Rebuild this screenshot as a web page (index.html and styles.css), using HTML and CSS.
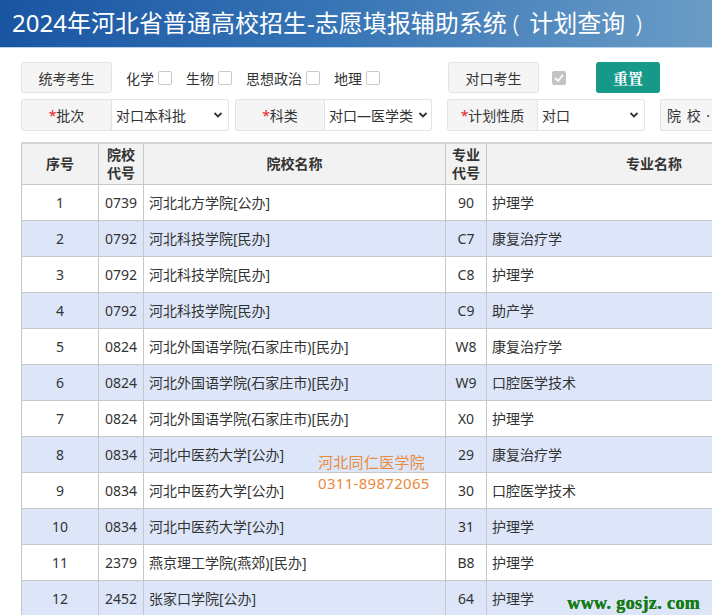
FILE: index.html
```html
<!DOCTYPE html>
<html lang="zh">
<head>
<meta charset="utf-8">
<title>计划查询</title>
<link rel="stylesheet" href="styles.css">
</head>
<body>
<header class="topbar">2024年河北省普通高校招生-志愿填报辅助系统<span class="paren">(</span>计划查询<span class="paren">)</span></header>

<div class="toolbar">
  <div class="row row-one">
    <span class="tag tag-wide">统考考生</span>
    <label class="chk">化学<span class="box"></span></label>
    <label class="chk">生物<span class="box"></span></label>
    <label class="chk">思想政治<span class="box"></span></label>
    <label class="chk">地理<span class="box"></span></label>
    <span class="tag tag-wide tag-dk">对口考生</span>
    <span class="box box-checked"><svg viewBox="0 0 14 14" width="14" height="14"><path d="M3 7.2 L6 10 L11 3.8" fill="none" stroke="#fff" stroke-width="1.8"/></svg></span>
    <button class="reset">重置</button>
  </div>
  <div class="row row-two">
    <div class="group g1"><span class="tag"><i>*</i>批次</span><span class="sel s1">对口本科批<svg class="chev" viewBox="0 0 10 8" width="10" height="8"><path d="M1.5 2 L5 5.5 L8.5 2" fill="none" stroke="#333" stroke-width="1.8"/></svg></span></div>
    <div class="group g2"><span class="tag"><i>*</i>科类</span><span class="sel s2">对口—医学类<svg class="chev" viewBox="0 0 10 8" width="10" height="8"><path d="M1.5 2 L5 5.5 L8.5 2" fill="none" stroke="#333" stroke-width="1.8"/></svg></span></div>
    <div class="group g3"><span class="tag"><i>*</i>计划性质</span><span class="sel s3">对口<svg class="chev" viewBox="0 0 10 8" width="10" height="8"><path d="M1.5 2 L5 5.5 L8.5 2" fill="none" stroke="#333" stroke-width="1.8"/></svg></span></div>
    <div class="group g4"><span class="tag tag-school">院 校 ·</span></div>
  </div>
</div>

<div class="tablewrap">
<table class="plan">
  <colgroup>
    <col class="c1"><col class="c2"><col class="c3"><col class="c4"><col class="c5">
  </colgroup>
  <thead>
    <tr><th>序号</th><th>院校<br>代号</th><th>院校名称</th><th>专业<br>代号</th><th>专业名称</th></tr>
  </thead>
  <tbody>
    <tr><td>1</td><td>0739</td><td class="l">河北北方学院[公办]</td><td>90</td><td class="l">护理学</td></tr>
    <tr class="alt"><td>2</td><td>0792</td><td class="l">河北科技学院[民办]</td><td>C7</td><td class="l">康复治疗学</td></tr>
    <tr><td>3</td><td>0792</td><td class="l">河北科技学院[民办]</td><td>C8</td><td class="l">护理学</td></tr>
    <tr class="alt"><td>4</td><td>0792</td><td class="l">河北科技学院[民办]</td><td>C9</td><td class="l">助产学</td></tr>
    <tr><td>5</td><td>0824</td><td class="l">河北外国语学院(石家庄市)[民办]</td><td>W8</td><td class="l">康复治疗学</td></tr>
    <tr class="alt"><td>6</td><td>0824</td><td class="l">河北外国语学院(石家庄市)[民办]</td><td>W9</td><td class="l">口腔医学技术</td></tr>
    <tr><td>7</td><td>0824</td><td class="l">河北外国语学院(石家庄市)[民办]</td><td>X0</td><td class="l">护理学</td></tr>
    <tr class="alt"><td>8</td><td>0834</td><td class="l">河北中医药大学[公办]</td><td>29</td><td class="l">康复治疗学</td></tr>
    <tr><td>9</td><td>0834</td><td class="l">河北中医药大学[公办]</td><td>30</td><td class="l">口腔医学技术</td></tr>
    <tr class="alt"><td>10</td><td>0834</td><td class="l">河北中医药大学[公办]</td><td>31</td><td class="l">护理学</td></tr>
    <tr><td>11</td><td>2379</td><td class="l">燕京理工学院(燕郊)[民办]</td><td>B8</td><td class="l">护理学</td></tr>
    <tr class="alt"><td>12</td><td>2452</td><td class="l">张家口学院[公办]</td><td>64</td><td class="l">护理学</td></tr>
  </tbody>
</table>
</div>

<div class="stamp">河北同仁医学院<br>0311-89872065</div>
<div class="site">www. gosjz. com</div>
</body>
</html>
```

FILE: styles.css
```css
* { box-sizing: border-box; }
html, body { margin: 0; padding: 0; }
body {
  width: 712px;
  height: 615px;
  overflow: hidden;
  position: relative;
  background: #fff;
  color: #333;
  font-family: "Noto Sans", "Noto Sans CJK SC", sans-serif;
  font-size: 14px;
}
.topbar {
  height: 48px;
  padding: 4px 0 0 12px;
  color: #fff;
  font-size: 24px;
  line-height: 38px;
  letter-spacing: 0;
  white-space: nowrap;
  background: linear-gradient(90deg, #1a55a2 0%, #3573b5 45%, #6a9cc6 100%);
  border-bottom: 1px solid #b9d3ea;
}
.paren {
  font-weight: 300;
  margin: 0 10px 0 6px;
}
.paren + .paren { margin: 0 0 0 10px; }
.toolbar {
  padding: 14px 0 0 21px;
}
.row {
  display: flex;
  align-items: center;
  white-space: nowrap;
}
.row-one { height: 31px; }
.row-two { height: 32px; margin-top: 6px; }
.tag {
  display: inline-flex;
  align-items: center;
  justify-content: center;
  height: 31px;
  background: #f5f5f5;
  border: 1px solid #e3e3e3;
  border-radius: 3px;
  color: #333;
}
.tag-wide { width: 91px; }
.tag-dk { margin-left: 68px; }
.chk {
  display: inline-flex;
  align-items: center;
  margin-left: 14px;
  color: #333;
}
.box {
  display: inline-block;
  width: 14px;
  height: 14px;
  margin-left: 4px;
  border: 1px solid #c9c9c9;
  border-radius: 2px;
  background: #fff;
}
.box-checked {
  margin-left: 13px;
  background: #c4c4c4;
  border-color: #c4c4c4;
  display: inline-flex;
}
.box-checked svg { display: block; margin: -1px; }
.reset {
  margin-left: 30px;
  width: 64px;
  height: 31px;
  border: 0;
  border-radius: 3px;
  background: #17998a;
  color: #fff;
  font-family: "Liberation Serif", "Noto Serif CJK SC", "Noto Sans CJK SC", serif;
  font-weight: bold;
  font-size: 15px;
  padding: 0;
}
.group {
  display: flex;
  height: 32px;
}
.group .tag {
  height: 32px;
  width: 91px;
  border-radius: 3px 0 0 3px;
}
.group i { font-style: normal; color: #e0262b; }
.sel {
  display: flex;
  align-items: center;
  justify-content: space-between;
  height: 32px;
  padding: 0 5px 0 4px;
  border: 1px solid #e3e3e3;
  border-left: 0;
  border-radius: 0 3px 3px 0;
  background: #fff;
  color: #333;
}
.chev { flex: none; }
.s1 { width: 117px; }
.g2 { margin-left: 6px; }
.g2 .tag { width: 90px; }
.s2 { width: 107px; padding-right: 3px; }
.g3 { margin-left: 15px; }
.s3 { width: 107px; }
.g4 { margin-left: 15px; }
.tag-school {
  width: 70px !important;
  justify-content: flex-start !important;
  padding-left: 6px;
  border-right: 0;
  border-radius: 3px 0 0 3px;
  letter-spacing: 1px;
}
.tablewrap {
  margin: 11px 0 0 21px;
  width: 800px;
}
.plan {
  border-collapse: collapse;
  table-layout: fixed;
  width: 800px;
  border-top: 2px solid #d5d5d5;
}
.c1 { width: 77px; }
.c2 { width: 45px; }
.c3 { width: 302px; }
.c4 { width: 41px; }
.c5 { width: 335px; }
.plan th, .plan td {
  border: 1px solid #c8c8c8;
  text-align: center;
  padding: 0;
}
.plan th {
  height: 41px;
  background: #f2f2f2;
  font-weight: bold;
  line-height: 18px;
  color: #333;
}
.plan td {
  height: 36px;
  color: #333;
}
.plan td.l { text-align: left; padding-left: 5px; }
.plan tr.alt td { background: #dde6f9; }
.stamp {
  position: absolute;
  left: 318px;
  top: 452px;
  color: #ea8a3e;
  font-size: 15px;
  line-height: 21px;
  letter-spacing: 0.3px;
}
.site {
  position: absolute;
  left: 567px;
  top: 593px;
  color: #147a14;
  font-family: "Liberation Serif", serif;
  font-weight: bold;
  font-size: 18px;
  letter-spacing: 0.4px;
  white-space: nowrap;
  text-shadow: 0.5px 0 0 #147a14;
}
```
